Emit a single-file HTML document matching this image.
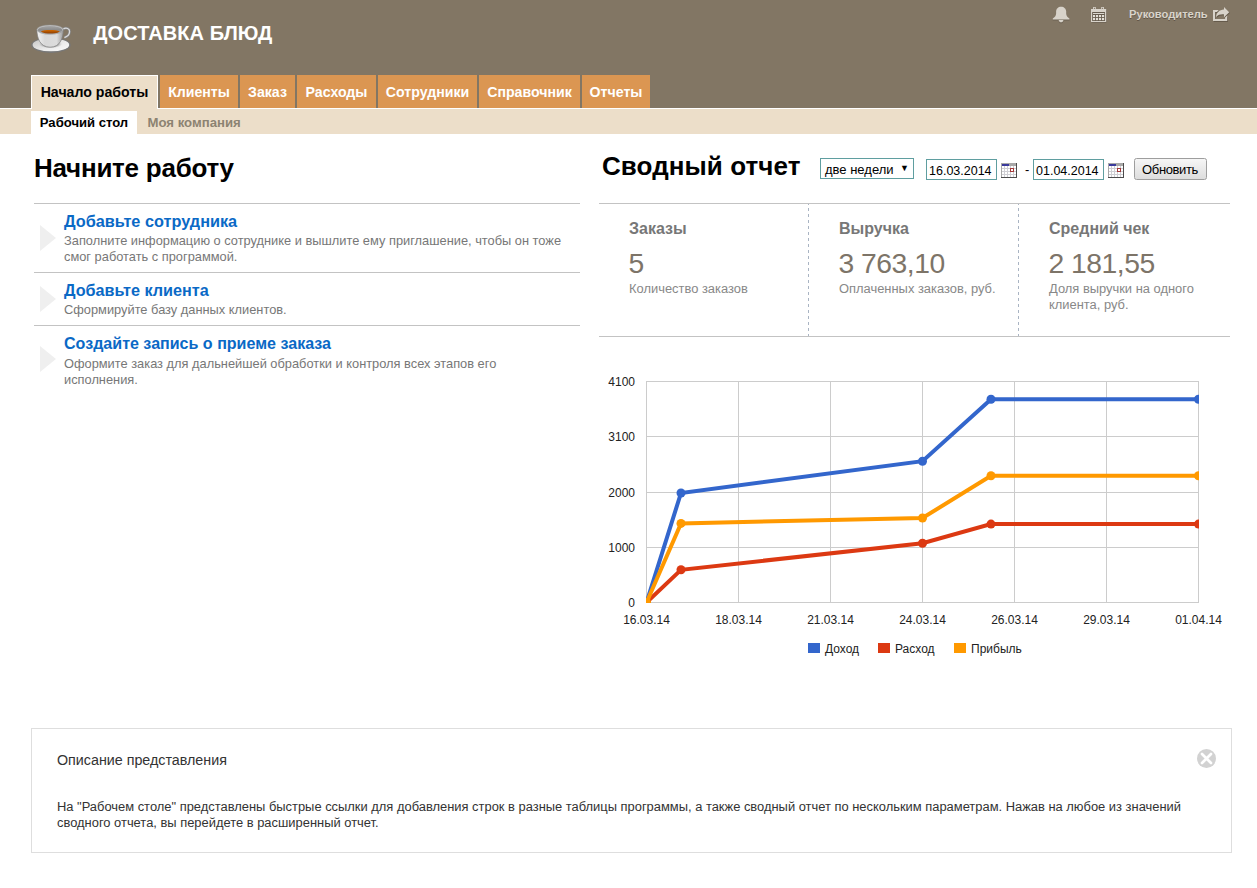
<!DOCTYPE html>
<html lang="ru">
<head>
<meta charset="utf-8">
<title>Доставка блюд</title>
<style>
*{box-sizing:border-box;margin:0;padding:0}
html,body{width:1257px;height:888px;overflow:hidden;background:#fff}
body{font-family:"Liberation Sans",Arial,sans-serif;color:#000;position:relative}
.abs{position:absolute;white-space:nowrap}
#hdr{position:absolute;left:0;top:0;width:1257px;height:108px;background:#827664}
#subnav{position:absolute;left:0;top:108px;width:1257px;height:26px;background:#ecdec9;border-top:1px solid #fff}
#title{left:93.3px;top:21px;letter-spacing:0.07px;font-size:20px;font-weight:bold;color:#fff;line-height:24px}
.tab{position:absolute;top:75px;height:33px;background:#db9652;color:#fff;font-weight:bold;font-size:14.15px;line-height:34px;text-align:center;white-space:nowrap}
.tab.act{background:#ecdec9;color:#000;border:1px solid #fff;border-bottom:none;height:34px;line-height:32px}
.sub{position:absolute;top:111px;height:23px;line-height:24px;font-size:13px;font-weight:bold;color:#8c8372;white-space:nowrap}
.sub.act{background:#fff;color:#000;text-align:center}
#user{left:1129px;top:7px;font-size:11.15px;font-weight:bold;color:#d9d4cb;line-height:14px;text-shadow:0 1px 0 rgba(60,50,40,.5)}
h1{position:absolute;font-size:26px;font-weight:bold;line-height:30px;white-space:nowrap;color:#000}
.hl{position:absolute;height:1px;background:#c3c3c3}
.lnk{position:absolute;left:64px;font-size:16.28px;font-weight:bold;color:#0a69c6;line-height:18px;white-space:nowrap}
.dsc{position:absolute;left:64px;width:510px;font-size:12.83px;color:#777;line-height:16px}
.tri{position:absolute;left:40px;width:0;height:0;border-left:16px solid #efefef;border-top:13.5px solid transparent;border-bottom:13.5px solid transparent}
.kt{position:absolute;font-size:16px;font-weight:bold;color:#777;line-height:18px;white-space:nowrap}
.kv{position:absolute;font-size:28.3px;letter-spacing:-0.5px;margin-left:.5px;color:#7d7468;line-height:30px;white-space:nowrap}
.kd{position:absolute;font-size:12.91px;color:#888;line-height:16px}
.vd{position:absolute;top:204px;width:1px;height:132px;background:linear-gradient(to bottom,#a9b4c3 0,#a9b4c3 3px,transparent 3px,transparent 6px);background-size:1px 6px;background-position:0 -2px;background-repeat:repeat-y}
.inp{position:absolute;height:21px;border:1px solid #5f9ea0;background:#fff;font-size:13px;line-height:21px;white-space:nowrap;color:#000}
#btn{position:absolute;left:1134px;top:158px;width:73px;height:22px;border:1px solid #9e9e9e;border-radius:2.5px;background:linear-gradient(#f6f6f6,#dddddd);font-size:13px;letter-spacing:-0.38px;line-height:22px;text-align:center;color:#000;padding-right:1px}
#box{position:absolute;left:31px;top:728px;width:1201px;height:125px;border:1px solid #dedede;background:#fff}
#boxt{left:57px;top:751px;font-size:14.29px;color:#333;line-height:18px}
#boxd{position:absolute;left:57px;top:799px;width:1140px;font-size:12.92px;color:#333;line-height:16px}
</style>
</head>
<body>
<div id="hdr"></div>
<div id="subnav"></div>
<svg id="cup" width="48" height="40" viewBox="26 18 48 40" style="position:absolute;left:26px;top:18px">
<defs>
<linearGradient id="cg1" x1="0" y1="0" x2="1" y2="0"><stop offset="0" stop-color="#f4f4f4"/><stop offset=".3" stop-color="#d8d8d8"/><stop offset=".75" stop-color="#dcdcdc"/><stop offset="1" stop-color="#9c9c9c"/></linearGradient>
<linearGradient id="cg2" x1="0" y1="0" x2="1" y2="1"><stop offset="0" stop-color="#c4c4c4"/><stop offset=".6" stop-color="#ececec"/><stop offset="1" stop-color="#fbfbfb"/></linearGradient>
<linearGradient id="cg3" x1="0" y1="0" x2="0" y2="1"><stop offset="0" stop-color="#a6a6a6"/><stop offset=".5" stop-color="#8a8a8a"/><stop offset="1" stop-color="#a4adb6"/></linearGradient>
<linearGradient id="cg4" x1="0" y1="0" x2="0" y2="1"><stop offset="0" stop-color="#d06800"/><stop offset="1" stop-color="#8a3c00"/></linearGradient>
<radialGradient id="cg5" cx=".5" cy=".5" r=".5"><stop offset="0" stop-color="#9a9a9a"/><stop offset=".7" stop-color="#b4b4b4"/><stop offset="1" stop-color="#d4d4d4" stop-opacity="0"/></radialGradient>
</defs>
<ellipse cx="50.9" cy="45.1" rx="19.8" ry="7.8" fill="#787878"/>
<ellipse cx="50.9" cy="44.9" rx="18.3" ry="6.4" fill="url(#cg2)"/>
<ellipse cx="50.3" cy="44" rx="12" ry="4.4" fill="url(#cg5)"/>
<path d="M63.200 29 C66.400 27.200 69.800 28.600 69.600 31.800 C69.400 34.800 66.800 36.800 64.400 37.600" fill="none" stroke="#858585" stroke-width="2.600"/>
<path d="M63.200 29 C66.400 27.200 69.800 28.600 69.600 31.800 C69.400 34.800 66.800 36.800 64.400 37.600" fill="none" stroke="#dcdcdc" stroke-width="1.300"/>
<path d="M36.900 29.600 C36.900 38 40 47.200 50.100 47.200 C60.200 47.200 63.300 38 63.300 29.600 Z" fill="url(#cg1)" stroke="#7c7c7c" stroke-width=".7"/>
<ellipse cx="50.100" cy="29.600" rx="13.200" ry="4.700" fill="#c4c4c4" stroke="#8a8a8a" stroke-width=".5"/>
<ellipse cx="50.100" cy="29.900" rx="12.200" ry="3.900" fill="url(#cg3)"/>
<path d="M40.800 31.400 C44 29.600 56 29.600 59.800 31.400 C57 33.400 53 33.600 50.300 33.600 C47 33.600 43 33.200 40.800 31.400 Z" fill="url(#cg4)"/>
</svg>
<div id="title" class="abs">ДОСТАВКА БЛЮД</div>
<div class="tab act" style="left:31px;width:127px">Начало работы</div>
<div class="tab" style="left:160px;width:78px">Клиенты</div>
<div class="tab" style="left:240px;width:55px">Заказ</div>
<div class="tab" style="left:297px;width:79px">Расходы</div>
<div class="tab" style="left:378px;width:99px">Сотрудники</div>
<div class="tab" style="left:479px;width:101px">Справочник</div>
<div class="tab" style="left:582px;width:68px">Отчеты</div>
<div class="sub act" style="left:31px;width:106px;font-size:13.09px">Рабочий стол</div>
<div class="sub" style="left:147.5px;font-size:13.18px">Моя компания</div>
<svg id="ico-bell" width="20" height="20" viewBox="1051 5 20 20" style="position:absolute;left:1051px;top:5px">
<g fill="#5a5045" opacity=".55" transform="translate(0,1)"><path d="M1061.1 6.700 C1058.200 6.700 1056.100 8.800 1056.100 11.600 L1056.100 13.600 C1056.100 16 1054.600 17.400 1052.800 18.400 L1052.800 19.400 L1069.400 19.400 L1069.400 18.400 C1067.600 17.400 1066.200 16 1066.200 13.600 L1066.200 11.600 C1066.200 8.800 1064 6.700 1061.1 6.700 Z"/><path d="M1058.700 20 H1063.400 C1063.200 21.500 1062.300 22.300 1061.050 22.300 C1059.800 22.300 1058.900 21.500 1058.700 20 Z"/></g>
<g fill="#d8d3ca"><path d="M1061.1 6.700 C1058.200 6.700 1056.100 8.800 1056.100 11.600 L1056.100 13.600 C1056.100 16 1054.600 17.400 1052.800 18.400 L1052.800 19.400 L1069.400 19.400 L1069.400 18.400 C1067.600 17.400 1066.200 16 1066.200 13.600 L1066.200 11.600 C1066.200 8.800 1064 6.700 1061.1 6.700 Z"/><path d="M1058.700 20 H1063.400 C1063.200 21.500 1062.300 22.300 1061.050 22.300 C1059.800 22.300 1058.900 21.500 1058.700 20 Z"/></g>
</svg>
<svg id="ico-cal" width="20" height="20" viewBox="1089 5 20 20" style="position:absolute;left:1089px;top:5px">
<rect x="1091.600" y="9.600" width="15" height="13.100" rx=".8" fill="#5a5045" opacity=".5"/>
<g fill="#d8d3ca">
<path fill-rule="evenodd" d="M1091 9 H1106.200 V22.100 H1091 Z M1092.300 12 V21 H1104.900 V12 Z"/>
<path fill-rule="evenodd" d="M1093.100 7 H1095.800 V10.500 H1093.100 Z M1094 7.800 V9.800 H1094.900 V7.800 Z"/>
<path fill-rule="evenodd" d="M1101.200 7 H1103.900 V10.500 H1101.200 Z M1102.100 7.800 V9.800 H1103 V7.800 Z"/>
<rect x="1093" y="13.100" width="11.200" height=".9"/>
<rect x="1093" y="15" width="2.100" height="2.100"/><rect x="1096" y="15" width="2.100" height="2.100"/><rect x="1099" y="15" width="2.100" height="2.100"/><rect x="1102" y="15" width="2.100" height="2.100"/><rect x="1093" y="18" width="2.100" height="2.100"/><rect x="1096" y="18" width="2.100" height="2.100"/><rect x="1099" y="18" width="2.100" height="2.100"/><rect x="1102" y="18" width="2.100" height="2.100"/>
</g>
<rect x="1092.300" y="12" width="12.600" height="9" fill="#5f5548" opacity=".55"/>
<g fill="#e4e0d8"><rect x="1093" y="13.100" width="11.200" height=".9"/><rect x="1093" y="15" width="2.100" height="2.100"/><rect x="1096" y="15" width="2.100" height="2.100"/><rect x="1099" y="15" width="2.100" height="2.100"/><rect x="1102" y="15" width="2.100" height="2.100"/><rect x="1093" y="18" width="2.100" height="2.100"/><rect x="1096" y="18" width="2.100" height="2.100"/><rect x="1099" y="18" width="2.100" height="2.100"/><rect x="1102" y="18" width="2.100" height="2.100"/></g>
</svg>
<svg id="ico-share" width="22" height="20" viewBox="1211 5 22 20" style="position:absolute;left:1211px;top:5px">
<g fill="#4e4438" opacity=".55" transform="translate(.7,.8)"><path d="M1213 10.100 H1218.600 L1217 12.100 H1215.100 V19.100 H1225.100 V17.400 L1227.200 15.600 V21.100 H1213 Z"/><path d="M1224 7.100 L1229.200 12.150 L1224 17.200 V14.400 C1220.600 14.200 1218 14.800 1216.100 17 C1216.300 12.600 1219.400 9.700 1224 9.500 Z"/></g>
<g fill="#d8d3ca"><path d="M1213 10.100 H1218.600 L1217 12.100 H1215.100 V19.100 H1225.100 V17.400 L1227.200 15.600 V21.100 H1213 Z"/><path d="M1224 7.100 L1229.200 12.150 L1224 17.200 V14.400 C1220.600 14.200 1218 14.800 1216.100 17 C1216.300 12.600 1219.400 9.700 1224 9.500 Z"/></g>
</svg>
<div id="user" class="abs">Руководитель</div>

<h1 style="left:34px;top:153px;letter-spacing:-0.25px">Начните работу</h1>
<div class="hl" style="left:34px;top:203px;width:546px"></div>
<div class="tri" style="top:225px"></div>
<div class="lnk" style="top:212px">Добавьте сотрудника</div>
<div class="dsc" style="top:233px">Заполните информацию о сотруднике и вышлите ему приглашение, чтобы он тоже смог работать с программой.</div>
<div class="hl" style="left:34px;top:272px;width:546px"></div>
<div class="tri" style="top:286px"></div>
<div class="lnk" style="top:281px;font-size:16.2px">Добавьте клиента</div>
<div class="dsc" style="top:302px">Сформируйте базу данных клиентов.</div>
<div class="hl" style="left:34px;top:325px;width:546px"></div>
<div class="tri" style="top:346px"></div>
<div class="lnk" style="top:334px;font-size:16.06px">Создайте запись о приеме заказа</div>
<div class="dsc" style="top:356px;width:470px">Оформите заказ для дальнейшей обработки и контроля всех этапов его исполнения.</div>

<h1 style="left:602px;top:151px;letter-spacing:0.08px">Сводный отчет</h1>
<div class="inp" style="left:820px;top:158px;width:94px;padding-left:4px">две недели <span style="font-size:9px;position:absolute;left:79px;top:-1px">▼</span></div>
<div class="inp" style="left:926px;top:159px;width:71px;padding-left:2px;font-size:12.5px;line-height:23px">16.03.2014</div>
<div class="abs" style="left:1025px;top:161px;font-size:13px;line-height:18px">-</div>
<div class="inp" style="left:1033px;top:159px;width:71px;padding-left:2px;font-size:12.5px;line-height:23px">01.04.2014</div>
<svg class="dcal" width="16" height="15" viewBox="0 0 16 15" shape-rendering="crispEdges" style="position:absolute;left:1001px;top:163px">
<rect x="0" y="0" width="16" height="15" fill="#cfcfd4"/>
<rect x="0" y="0" width="16" height="1" fill="#a8a8a8"/><rect x="0" y="0" width="1" height="15" fill="#a8a8a8"/>
<rect x="1" y="1" width="7" height="2" fill="#3a3a9c"/><rect x="8" y="1" width="7" height="2" fill="#a8a8a8"/>
<rect x="1" y="3" width="2" height="2" fill="#fff"/><rect x="4" y="3" width="2" height="2" fill="#fff"/><rect x="7" y="3" width="2" height="2" fill="#fff"/><rect x="10" y="3" width="2" height="2" fill="#fff"/><rect x="13" y="3" width="2" height="2" fill="#fff"/><rect x="1" y="6" width="2" height="2" fill="#fff"/><rect x="4" y="6" width="2" height="2" fill="#fff"/><rect x="7" y="6" width="2" height="2" fill="#fff"/><rect x="10" y="6" width="2" height="2" fill="#fff"/><rect x="13" y="6" width="2" height="2" fill="#fff"/><rect x="1" y="9" width="2" height="2" fill="#fff"/><rect x="4" y="9" width="2" height="2" fill="#fff"/><rect x="7" y="9" width="2" height="2" fill="#fff"/><rect x="10" y="9" width="2" height="2" fill="#fff"/><rect x="13" y="9" width="2" height="2" fill="#fff"/><rect x="1" y="12" width="2" height="2" fill="#fff"/><rect x="4" y="12" width="2" height="2" fill="#fff"/><rect x="7" y="12" width="2" height="2" fill="#fff"/><rect x="10" y="12" width="2" height="2" fill="#fff"/><rect x="13" y="12" width="2" height="2" fill="#fff"/>
<rect x="9" y="5" width="4" height="4" fill="#a43a3a"/><rect x="10" y="6" width="2" height="2" fill="#fff"/>
<rect x="15" y="0" width="1" height="15" fill="#4c4c4c"/><rect x="0" y="14" width="16" height="1" fill="#4c4c4c"/>
</svg>
<svg class="dcal" width="16" height="15" viewBox="0 0 16 15" shape-rendering="crispEdges" style="position:absolute;left:1108px;top:163px">
<rect x="0" y="0" width="16" height="15" fill="#cfcfd4"/>
<rect x="0" y="0" width="16" height="1" fill="#a8a8a8"/><rect x="0" y="0" width="1" height="15" fill="#a8a8a8"/>
<rect x="1" y="1" width="7" height="2" fill="#3a3a9c"/><rect x="8" y="1" width="7" height="2" fill="#a8a8a8"/>
<rect x="1" y="3" width="2" height="2" fill="#fff"/><rect x="4" y="3" width="2" height="2" fill="#fff"/><rect x="7" y="3" width="2" height="2" fill="#fff"/><rect x="10" y="3" width="2" height="2" fill="#fff"/><rect x="13" y="3" width="2" height="2" fill="#fff"/><rect x="1" y="6" width="2" height="2" fill="#fff"/><rect x="4" y="6" width="2" height="2" fill="#fff"/><rect x="7" y="6" width="2" height="2" fill="#fff"/><rect x="10" y="6" width="2" height="2" fill="#fff"/><rect x="13" y="6" width="2" height="2" fill="#fff"/><rect x="1" y="9" width="2" height="2" fill="#fff"/><rect x="4" y="9" width="2" height="2" fill="#fff"/><rect x="7" y="9" width="2" height="2" fill="#fff"/><rect x="10" y="9" width="2" height="2" fill="#fff"/><rect x="13" y="9" width="2" height="2" fill="#fff"/><rect x="1" y="12" width="2" height="2" fill="#fff"/><rect x="4" y="12" width="2" height="2" fill="#fff"/><rect x="7" y="12" width="2" height="2" fill="#fff"/><rect x="10" y="12" width="2" height="2" fill="#fff"/><rect x="13" y="12" width="2" height="2" fill="#fff"/>
<rect x="9" y="5" width="4" height="4" fill="#a43a3a"/><rect x="10" y="6" width="2" height="2" fill="#fff"/>
<rect x="15" y="0" width="1" height="15" fill="#4c4c4c"/><rect x="0" y="14" width="16" height="1" fill="#4c4c4c"/>
</svg>
<div id="btn">Обновить</div>

<div class="hl" style="left:599px;top:203px;width:631px"></div>
<div class="hl" style="left:599px;top:336px;width:631px"></div>
<div class="vd" style="left:808px"></div>
<div class="vd" style="left:1018px"></div>
<div class="kt" style="left:629px;top:220px">Заказы</div>
<div class="kv" style="left:628px;top:248px">5</div>
<div class="kd" style="left:629px;top:281px">Количество заказов</div>
<div class="kt" style="left:839px;top:220px">Выручка</div>
<div class="kv" style="left:838px;top:248px">3 763,10</div>
<div class="kd" style="left:839px;top:281px">Оплаченных заказов, руб.</div>
<div class="kt" style="left:1049px;top:220px">Средний чек</div>
<div class="kv" style="left:1048px;top:248px">2 181,55</div>
<div class="kd" style="left:1049px;top:281px;width:170px">Доля выручки на одного клиента, руб.</div>

<svg id="chart" width="667" height="310" viewBox="590 360 667 310" style="position:absolute;left:590px;top:360px;font-family:'Liberation Sans',Arial,sans-serif;font-size:12px">
<defs><clipPath id="cp"><rect x="646" y="381" width="553" height="222"/></clipPath></defs>
<rect x="646" y="381" width="1" height="222" fill="#ccc"/>
<rect x="738" y="381" width="1" height="222" fill="#ccc"/>
<rect x="830" y="381" width="1" height="222" fill="#ccc"/>
<rect x="922" y="381" width="1" height="222" fill="#ccc"/>
<rect x="1014" y="381" width="1" height="222" fill="#ccc"/>
<rect x="1106" y="381" width="1" height="222" fill="#ccc"/>
<rect x="1198" y="381" width="1" height="222" fill="#ccc"/>
<rect x="646" y="381" width="553" height="1" fill="#ccc"/>
<rect x="646" y="436" width="553" height="1" fill="#ccc"/>
<rect x="646" y="492" width="553" height="1" fill="#ccc"/>
<rect x="646" y="547" width="553" height="1" fill="#ccc"/>
<rect x="646" y="602" width="553" height="1" fill="#ccc"/>
<g clip-path="url(#cp)"><path d="M646.5,602.5 L681.0,493.0 L922.5,461.2 L991.0,399.3 L1198.5,399.3" fill="none" stroke="#3366cc" stroke-width="4"/><circle cx="646.5" cy="602.5" r="4.5" fill="#3366cc"/><circle cx="681.0" cy="493.0" r="4.5" fill="#3366cc"/><circle cx="922.5" cy="461.2" r="4.5" fill="#3366cc"/><circle cx="991.0" cy="399.3" r="4.5" fill="#3366cc"/><circle cx="1198.5" cy="399.3" r="4.5" fill="#3366cc"/></g>
<g clip-path="url(#cp)"><path d="M646.5,602.5 L681.0,569.8 L922.5,543.2 L991.0,524.1 L1198.5,524.1" fill="none" stroke="#dc3912" stroke-width="4"/><circle cx="646.5" cy="602.5" r="4.5" fill="#dc3912"/><circle cx="681.0" cy="569.8" r="4.5" fill="#dc3912"/><circle cx="922.5" cy="543.2" r="4.5" fill="#dc3912"/><circle cx="991.0" cy="524.1" r="4.5" fill="#dc3912"/><circle cx="1198.5" cy="524.1" r="4.5" fill="#dc3912"/></g>
<g clip-path="url(#cp)"><path d="M646.5,602.5 L681.0,523.4 L922.5,518.0 L991.0,475.8 L1198.5,475.8" fill="none" stroke="#ff9900" stroke-width="4"/><circle cx="646.5" cy="602.5" r="4.5" fill="#ff9900"/><circle cx="681.0" cy="523.4" r="4.5" fill="#ff9900"/><circle cx="922.5" cy="518.0" r="4.5" fill="#ff9900"/><circle cx="991.0" cy="475.8" r="4.5" fill="#ff9900"/><circle cx="1198.5" cy="475.8" r="4.5" fill="#ff9900"/></g>
<text x="635" y="385.7" text-anchor="end" fill="#222">4100</text>
<text x="635" y="440.7" text-anchor="end" fill="#222">3100</text>
<text x="635" y="496.7" text-anchor="end" fill="#222">2000</text>
<text x="635" y="551.7" text-anchor="end" fill="#222">1000</text>
<text x="635" y="606.7" text-anchor="end" fill="#222">0</text>
<text x="646.5" y="624" text-anchor="middle" fill="#222">16.03.14</text>
<text x="738.5" y="624" text-anchor="middle" fill="#222">18.03.14</text>
<text x="830.5" y="624" text-anchor="middle" fill="#222">21.03.14</text>
<text x="922.5" y="624" text-anchor="middle" fill="#222">24.03.14</text>
<text x="1014.5" y="624" text-anchor="middle" fill="#222">26.03.14</text>
<text x="1106.5" y="624" text-anchor="middle" fill="#222">29.03.14</text>
<text x="1198.5" y="624" text-anchor="middle" fill="#222">01.04.14</text>
<rect x="808" y="643" width="12" height="10" fill="#3366cc"/><text x="825" y="652.7" fill="#222">Доход</text>
<rect x="878" y="643" width="12" height="10" fill="#dc3912"/><text x="895" y="652.7" fill="#222">Расход</text>
<rect x="954" y="643" width="12" height="10" fill="#ff9900"/><text x="971" y="652.7" fill="#222">Прибыль</text>
</svg>
<div id="box"></div>
<svg id="closex" width="21" height="21" viewBox="0 0 21 21" style="position:absolute;left:1196px;top:748px">
<circle cx="10.5" cy="10.5" r="9.5" fill="#d2d2d2"/>
<path d="M6 6 L15 15 M15 6 L6 15" stroke="#fff" stroke-width="2.7" stroke-linecap="round"/>
</svg>
<div id="boxt" class="abs">Описание представления</div>
<div id="boxd">На "Рабочем столе" представлены быстрые ссылки для добавления строк в разные таблицы программы, а также сводный отчет по нескольким параметрам. Нажав на любое из значений сводного отчета, вы перейдете в расширенный отчет.</div>
</body>
</html>
